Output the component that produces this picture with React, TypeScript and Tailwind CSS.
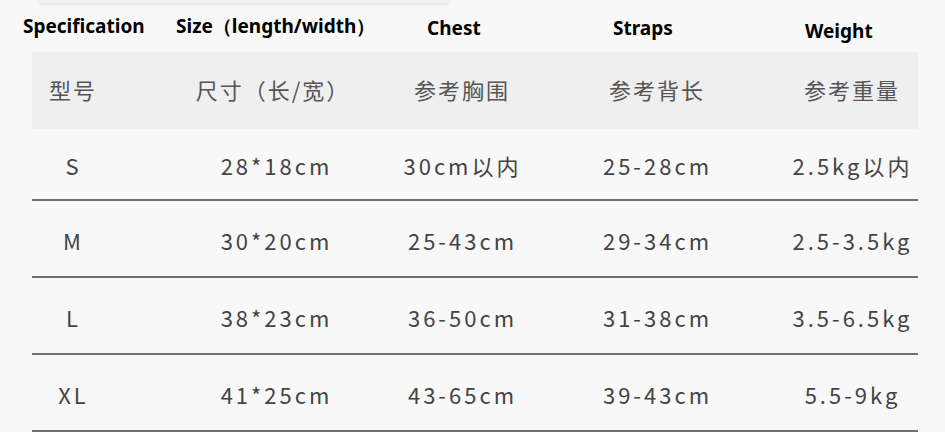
import React from 'react';

const en = [
  { label: 'Specification', cls: 'w-[153px] pt-[13px]' },
  { label: 'Size（length/width）', cls: 'w-[251px] pt-[13px]' },
  { label: 'Chest', cls: 'w-[186px] pt-[15px]' },
  { label: 'Straps', cls: 'w-[192px] pt-[15px]' },
  { label: 'Weight', cls: 'w-[120px] pt-[18px]' },
];

const cols = [
  'w-[80px]',
  'ml-[60px] w-[200px]',
  'w-[178px]',
  'ml-[12px] w-[188px]',
  'ml-[12px] w-[178px]',
];

const head = ['型号', '尺寸（长/宽）', '参考胸围', '参考背长', '参考重量'];

const rows = [
  ['S', '28*18cm', '30cm以内', '25-28cm', '2.5kg以内'],
  ['M', '30*20cm', '25-43cm', '29-34cm', '2.5-3.5kg'],
  ['L', '38*23cm', '36-50cm', '31-38cm', '3.5-6.5kg'],
  ['XL', '41*25cm', '43-65cm', '39-43cm', '5.5-9kg'],
];

export default function App() {
  return (
    <div className="w-[945px] h-[432px] overflow-hidden bg-[#f8f8f8] font-['Noto_Sans',sans-serif]">
      <div className="ml-[38px] h-[3px] w-[412px] rounded-b-[6px] bg-[#f1f1f1] shadow-[0_1px_3px_rgba(0,0,0,0.12)]" />

      <div className="flex h-[49px] pl-[23px] text-[19px] font-bold leading-[20px] text-black">
        {en.map((h) => (
          <div key={h.label} className={`${h.cls} shrink-0 whitespace-nowrap`}>
            {h.label}
          </div>
        ))}
      </div>

      <div className="ml-[32px] w-[886px] font-['Noto_Sans_CJK_SC',sans-serif]">
        <div className="flex h-[77px] items-center bg-[#efefef] pb-[3px] text-[22px] tracking-[2px] text-[#555]">
          {head.map((h, i) => (
            <div key={h} className={`${cols[i]} shrink-0 pl-[2px] text-center`}>
              {h}
            </div>
          ))}
        </div>

        {rows.map((r, ri) => (
          <div
            key={r[0]}
            className={`flex items-center border-b-2 border-[#707070] pt-[3px] text-[22px] tracking-[3px] text-[#444] ${
              ri === 0 ? 'h-[72px]' : 'h-[77px]'
            }`}
          >
            {r.map((c, i) => (
              <div key={i} className={`${cols[i]} shrink-0 text-center ${i === 1 ? 'pl-[9px]' : 'pl-[3px]'}`}>
                {c}
              </div>
            ))}
          </div>
        ))}
      </div>
    </div>
  );
}
